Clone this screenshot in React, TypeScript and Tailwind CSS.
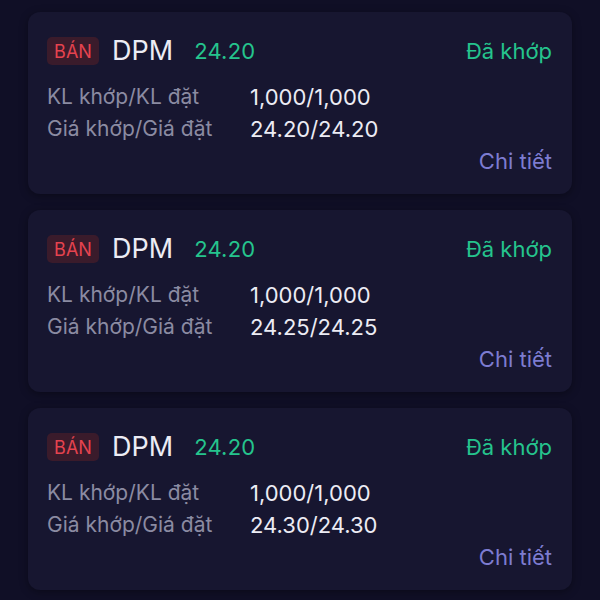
const orders = [
  { side: "BÁN", code: "DPM", price: "24.20", status: "Đã khớp", qty: "1,000/1,000", px: "24.20/24.20" },
  { side: "BÁN", code: "DPM", price: "24.20", status: "Đã khớp", qty: "1,000/1,000", px: "24.25/24.25" },
  { side: "BÁN", code: "DPM", price: "24.20", status: "Đã khớp", qty: "1,000/1,000", px: "24.30/24.30" },
]

type Order = (typeof orders)[number]

function OrderCard({ order }: { order: Order }) {
  return (
    <div className="rounded-[12px] bg-[#171630] pl-[19px] pr-[20px] pt-[25px] pb-[17px] shadow-[0_2px_8px_rgba(0,0,0,0.35)]">
      {/* Header */}
      <div className="flex h-[28px] items-center">
        <span className="flex h-[28px] w-[52px] items-center justify-center rounded-[5px] bg-[#3a1b2b] text-[18px] text-[#e5434f]">
          {order.side}
        </span>
        <span className="ml-[13px] text-[27px] text-[#ececf4]">{order.code}</span>
        <span className="ml-[21px] text-[22px] tracking-[0.01em] text-[#25c48d]">{order.price}</span>
        <span className="ml-auto text-[22px] text-[#25c48d]">{order.status}</span>
      </div>

      {/* Details */}
      <div className="mt-[16px] grid grid-cols-[203px_1fr] text-[21px] leading-[32px]">
        <span className="text-[#8b8ba2]">KL khớp/KL đặt</span>
        <span className="text-[22px] text-[#ececf4]">{order.qty}</span>
        <span className="text-[#8b8ba2]">Giá khớp/Giá đặt</span>
        <span className="text-[22px] text-[#ececf4]">{order.px}</span>
      </div>

      <div className="flex justify-end text-[22px] leading-[32px] text-[#7d7cd0]">Chi tiết</div>
    </div>
  )
}

export default function App() {
  return (
    <div
      className="flex h-[600px] w-[600px] flex-col gap-[16px] overflow-hidden bg-[#100f26] px-[28px] pt-[12px]"
      style={{ fontFamily: "Inter, 'Noto Sans', sans-serif" }}
    >
      {orders.map((o, i) => (
        <OrderCard key={i} order={o} />
      ))}
    </div>
  )
}
